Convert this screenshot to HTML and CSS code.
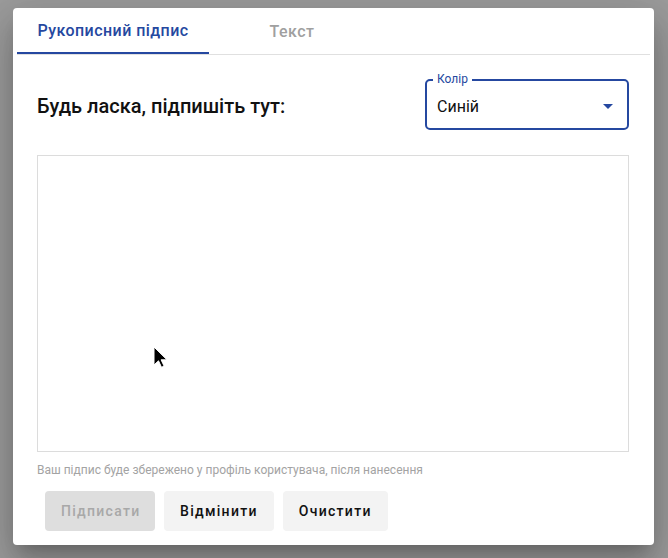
FILE: index.html
```html
<!DOCTYPE html>
<html lang="uk">
<head>
<meta charset="utf-8">
<link rel="stylesheet" href="styles.css">
</head>
<body>
<div class="dialog">
  <div class="tabs">
    <div class="tab active">Рукописний підпис</div>
    <div class="tab">Текст</div>
  </div>
  <div class="head">
    <div class="title">Будь ласка, підпишіть тут:</div>
    <div class="select">
      <span class="label">Колір</span>
      <span class="value">Синій</span>
      <svg class="arrow" width="10" height="5" viewBox="0 0 10 5"><path d="M0 0h10L5 5z" fill="#2548a0"/></svg>
    </div>
  </div>
  <div class="pad">
    <svg class="cursor" width="18" height="24" viewBox="0 0 18 24"><path d="M1 1v18l4.5-4.2 3 6.5 2.6-1.2-3-6.3H14z" fill="#000" stroke="#fff" stroke-width="1"/></svg>
  </div>
  <div class="hint">Ваш підпис буде збережено у профіль користувача, після нанесення</div>
  <div class="actions">
    <button class="btn disabled">Підписати</button>
    <button class="btn">Відмінити</button>
    <button class="btn">Очистити</button>
  </div>
</div>
</body>
</html>
```
FILE: styles.css
```css
html, body { margin: 0; padding: 0; }
body {
  width: 668px;
  height: 558px;
  background: #9c9c9c;
  font-family: Roboto, "Noto Sans", sans-serif;
  overflow: hidden;
}
.dialog {
  margin: 8px 0 0 13px;
  width: 641px;
  height: 537px;
  background: #fff;
  border-radius: 4px;
  box-shadow: 0 11px 15px -7px rgba(0,0,0,.2), 0 24px 38px 3px rgba(0,0,0,.14), 0 9px 46px 8px rgba(0,0,0,.12);
  box-sizing: border-box;
  padding: 0 4px;
}
.tabs {
  display: flex;
  height: 46px;
  border-bottom: 1px solid #e0e0e0;
}
.tab {
  height: 46px;
  box-sizing: border-box;
  display: flex;
  align-items: center;
  justify-content: center;
  font-size: 16px;
  font-weight: 500;
  letter-spacing: 0.45px;
  color: #a0a0a0;
  width: 166px;
}
.tab.active {
  width: 192px;
  color: #2548a0;
  border-bottom: 2px solid #2548a0;
  margin-bottom: -1px;
  padding-top: 1px;
}
.head {
  display: flex;
  align-items: center;
  justify-content: space-between;
  padding: 24px 21px 0 20px;
}
.title {
  font-size: 20px;
  font-weight: 500;
  color: #111;
  padding-top: 2px;
}
.select {
  position: relative;
  width: 204px;
  height: 51px;
  box-sizing: border-box;
  border: 2px solid #2548a0;
  border-radius: 5px;
  display: flex;
  align-items: center;
  padding: 4px 14px 0 10px;
}
.label {
  position: absolute;
  top: -9px;
  left: 6px;
  padding: 0 4px;
  background: #fff;
  font-size: 12px;
  line-height: 14px;
  color: #2548a0;
}
.value {
  flex: 1;
  font-size: 16px;
  color: #111;
}
.arrow { display: block; }
.pad {
  position: relative;
  margin: 25px 21px 0 20px;
  height: 297px;
  border: 1px solid #dcdcdc;
  box-sizing: border-box;
}
.cursor {
  position: absolute;
  left: 115px;
  top: 190px;
}
.hint {
  margin: 11px 0 0 20px;
  font-size: 12px;
  line-height: 14px;
  color: #a3a3a3;
}
.actions {
  display: flex;
  gap: 9px;
  padding: 14px 0 0 28px;
}
.btn {
  height: 40px;
  border: none;
  border-radius: 4px;
  background: #f3f3f3;
  font-family: Roboto, sans-serif;
  font-size: 14px;
  font-weight: 500;
  letter-spacing: 1.3px;
  color: #111;
  padding: 0 16px;
}
.btn.disabled {
  background: #dedede;
  color: #a8a8a8;
  width: 110px;
}
```
